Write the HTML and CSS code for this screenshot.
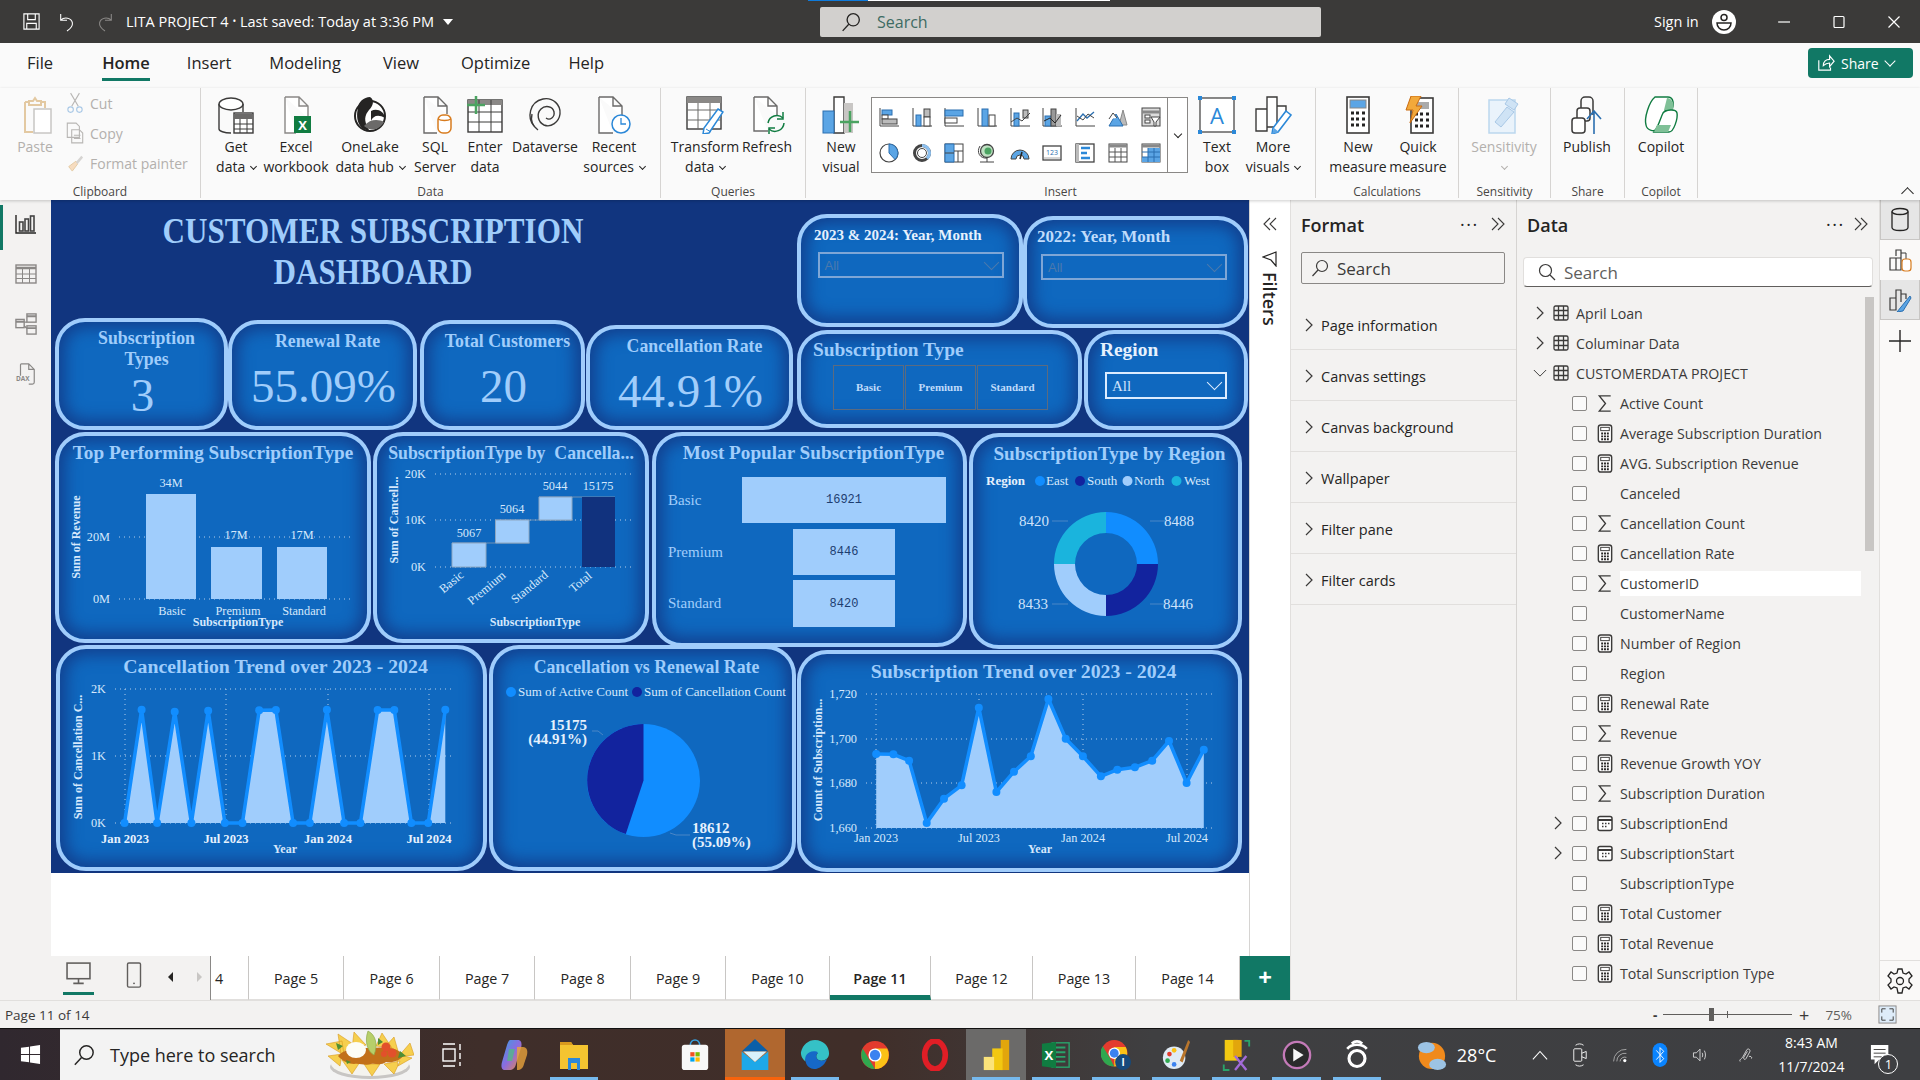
FILE: index.html
```html
<!DOCTYPE html>
<html lang="en">
<head>
    <meta charset="UTF-8">
    <title>LITA PROJECT 4 - Power BI Desktop</title>
    <link rel="stylesheet" href="styles.css">
</head>
<body>
    <svg class="defs" width="0" height="0">
        <symbol id="i-table" viewBox="0 0 16 16"><path d="M2.5 1h11a1.5 1.500 0 0 1 1.500 1.500v11a1.500 1.500 0 0 1-1.500 1.500h-11a1.500 1.500 0 0 1-1.500-1.500v-11A1.500 1.500 0 0 1 2.500 1zM1 5.500h14M1 10.500h14M5.500 1v14M10.500 1v14" fill="none" stroke="#3b3a39" stroke-width="1.300"/></symbol>
        <symbol id="i-sigma" viewBox="0 0 16 20"><path d="M14 2H2l6.500 8L2 18h12" fill="none" stroke="#3b3a39" stroke-width="1.400"/></symbol>
        <symbol id="i-calc" viewBox="0 0 16 20"><rect x="1" y="1" width="14" height="18" rx="2.500" fill="#fff" stroke="#3b3a39" stroke-width="1.500"/><rect x="3.500" y="3.500" width="9" height="3.500" fill="none" stroke="#3b3a39"/><path d="M4 10h2M7 10h2M10 10h2M4 13h2M7 13h2M10 13h2M4 16h2M7 16h2M10 16h2" stroke="#252423" stroke-width="2"/></symbol>
        <symbol id="i-date" viewBox="0 0 16 16"><rect x="1" y="1" width="14" height="14" rx="2" fill="#fff" stroke="#3b3a39" stroke-width="1.500"/><path d="M1 4.500h14" stroke="#3b3a39" stroke-width="2"/><path d="M5 8h1.500M8 8h1.500M11 8h1.500M5 11h1.500M8 11h1.500" stroke="#3b3a39" stroke-width="1.500"/></symbol>
        <symbol id="i-chev" viewBox="0 0 10 16"><path d="M2 2l6 6-6 6" fill="none" stroke="#3b3a39" stroke-width="1.200"/></symbol>
        <symbol id="i-dchev" viewBox="0 0 16 16"><path d="M2 2l6 6-6 6M8 2l6 6-6 6" fill="none" stroke="#3b3a39" stroke-width="1.100"/></symbol>
        <symbol id="i-mag" viewBox="0 0 18 18"><circle cx="11" cy="7" r="5.500" fill="none" stroke="currentColor" stroke-width="1.200"/><path d="M7 11l-5.500 6" fill="none" stroke="currentColor" stroke-width="1.200"/></symbol>
        <marker id="dot" markerUnits="userSpaceOnUse" markerWidth="10" markerHeight="10" refX="5" refY="5"><circle cx="5" cy="5" r="4" fill="#118dff"/></marker>
    </svg>

    <header class="titlebar">
        <svg class="tb-ic" viewBox="0 0 20 20"><path d="M2 2h16v16H2zM6 2v6h8V2M5 18v-6h10v6" fill="none" stroke="#fff" stroke-width="1.200"/></svg>
        <svg class="tb-undo" viewBox="0 0 20 24"><path d="M3 3v7h7M3 10c4-4 12-3 13 3 .6 4-3 7-6 9" fill="none" stroke="#fff" stroke-width="1.200"/></svg>
        <svg class="tb-redo" viewBox="0 0 20 24"><path d="M17 3v7h-7M17 10c-4-4-12-3-13 3-.6 4 3 7 6 9" fill="none" stroke="#8a8886" stroke-width="1.200"/></svg>
        <div class="doc-title">LITA PROJECT 4 <span class="mid-dot">•</span> Last saved: Today at 3:36 PM</div>
        <span class="doc-caret"></span>
        <div class="top-search">
            <svg class="top-search-ic"><use href="#i-mag"/></svg>
            <span>Search</span>
        </div>
        <div class="signin">Sign in</div>
        <svg class="avatar" viewBox="0 0 24 24"><circle cx="12" cy="12" r="12" fill="#fff"/><circle cx="12" cy="7.500" r="3" fill="none" stroke="#252423" stroke-width="1.500"/><path d="M5 13h14c0 4-3 7-7 7s-7-3-7-7z" fill="none" stroke="#252423" stroke-width="1.500"/></svg>
        <div class="win-btns">
            <svg viewBox="0 0 14 14"><path d="M1 7h12" stroke="#fff" stroke-width="1.200"/></svg>
            <svg viewBox="0 0 14 14"><rect x="2" y="1.500" width="10" height="11" rx="1" fill="none" stroke="#fff" stroke-width="1.200"/></svg>
            <svg viewBox="0 0 14 14"><path d="M1.500 1.500l11 11M12.500 1.500l-11 11" stroke="#fff" stroke-width="1.200"/></svg>
        </div>
    </header>

    <nav class="menubar">
        <a class="tab-file">File</a>
        <a class="tab-home">Home</a>
        <a class="tab-insert">Insert</a>
        <a class="tab-modeling">Modeling</a>
        <a class="tab-view">View</a>
        <a class="tab-optimize">Optimize</a>
        <a class="tab-help">Help</a>
        <button class="share-btn">
            <svg viewBox="0 0 20 20"><path d="M2 7v11h13v-3M7 13c0-5 3-7 7-7V2l5 6-5 6v-4c-3 0-5 1-7 3z" fill="none" stroke="#fff" stroke-width="1.300"/></svg>
            Share
            <span class="share-caret"></span>
        </button>
    </nav>

    <section class="ribbon">
        <div class="rgroup g-clip">
            <div class="rbody">
                <div class="rbtn w-paste off">
                    <svg viewBox="0 0 38 38"><path d="M13 5h4l2-3 2 3h4v4H13zM9 6h4M25 6h4v6M9 6v30h8" fill="none" stroke="#e3c9a2" stroke-width="2"/><rect x="18" y="13" width="17" height="24" fill="#fff" stroke="#c8c6c4" stroke-width="1.500"/></svg>
                    <span>Paste</span>
                </div>
                <div class="clip-col off">
                    <div class="clip-row"><svg viewBox="0 0 16 20"><path d="M4 1l7 12M12 1L5 13" stroke="#b8b6b4" fill="none"/><circle cx="4" cy="16" r="2.500" fill="none" stroke="#a9c8e6"/><circle cx="12" cy="16" r="2.500" fill="none" stroke="#a9c8e6"/></svg>Cut</div>
                    <div class="clip-row"><svg viewBox="0 0 16 20"><path d="M1 1h8l3 3v10H1zM5 7h7l3 3v9H5z" fill="#fafafa" stroke="#b8b6b4"/><path d="M7 12h6M7 15h6" stroke="#b8b6b4"/></svg>Copy</div>
                    <div class="clip-row"><svg viewBox="0 0 20 20"><path d="M11 8l-8 6 4 5 6-8z" fill="#f6dcc0" stroke="#e3c9a2"/><path d="M11 9l6-7 2 2-6 7z" fill="#d6d4d2"/></svg>Format painter</div>
                </div>
            </div>
            <div class="rlabel">Clipboard</div>
        </div>

        <div class="rgroup g-data">
            <div class="rbody">
                <div class="rbtn w-60">
                    <svg viewBox="0 0 38 38"><path d="M2 8v25c0 2 5 4 12 4M26 8v8" fill="none" stroke="#3b3a39" stroke-width="1.400"/><ellipse cx="14" cy="8" rx="12" ry="6" fill="#fff" stroke="#3b3a39" stroke-width="1.400"/><rect x="17" y="17" width="19" height="20" fill="#fff" stroke="#3b3a39" stroke-width="1.400"/><path d="M17 18h19v5H17z" fill="#6b6a69"/><path d="M17 28h19M17 33h19M23 23v14M30 23v14" stroke="#3b3a39"/></svg>
                    <span>Get<br>data <i class="mini-caret"></i></span>
                </div>
                <div class="rbtn w-60">
                    <svg viewBox="0 0 38 38"><path d="M8 1h14l9 9v12M8 1v36h11M22 1v9h9" fill="#fff" stroke="#8a8886" stroke-width="1.400"/><rect x="17" y="20" width="17" height="17" fill="#107c41"/><text class="xl-x" x="25.500" y="33.500" text-anchor="middle">X</text></svg>
                    <span>Excel<br>workbook</span>
                </div>
                <div class="rbtn w-88">
                    <svg viewBox="0 0 38 38"><circle cx="19" cy="20" r="15" fill="#fff" stroke="#252423" stroke-width="2"/><path d="M7 12c0-6 6-11 12-11 5 3 3 9-1 13-4 5-6 10 0 20-9 1-14-10-11-22z" fill="#252423"/><path d="M20 15c6-3 13 0 14 7-7-4-12-2-14 3z" fill="#252423"/><path d="M13 30c6-7 14-7 20-4-5 8-13 10-20 4z" fill="#6b6a69"/></svg>
                    <span>OneLake<br>data hub <i class="mini-caret"></i></span>
                </div>
                <div class="rbtn w-42">
                    <svg viewBox="0 0 38 38"><path d="M8 1h14l9 9v8M8 1v36h13M22 1v9h9" fill="#fff" stroke="#6b6a69" stroke-width="1.400"/><rect x="22" y="19" width="13" height="18" rx="5" fill="#fff" stroke="#d87c1f" stroke-width="1.500"/><path d="M22 23c3 2 10 2 13 0" fill="none" stroke="#d87c1f" stroke-width="1.500"/></svg>
                    <span>SQL<br>Server</span>
                </div>
                <div class="rbtn w-58">
                    <svg viewBox="0 0 38 38"><rect x="2" y="4" width="34" height="32" fill="#fff" stroke="#3b3a39" stroke-width="1.400"/><path d="M2 4h34v5H2z" fill="#8a8886"/><path d="M2 16h34M2 26h34M13 4v32M25 4v32" stroke="#3b3a39"/><path d="M10 0v18M1 9h18" stroke="#4ba361" stroke-width="2.500"/></svg>
                    <span>Enter<br>data</span>
                </div>
                <div class="rbtn w-62">
                    <svg viewBox="0 0 38 38"><g fill="none" stroke="#3b3a39" stroke-width="1.400"><path d="M8 30C1 22 3 6 17 3c10-2 18 6 17 15-1 8-9 14-16 11-6-3-8-11-3-16 4-4 12-3 13 3 1 5-4 9-8 6"/><path d="M12 34C4 28 5 22 6 18"/></g></svg>
                    <span>Dataverse</span>
                </div>
                <div class="rbtn w-76">
                    <svg viewBox="0 0 38 38"><path d="M4 1h14l9 9v10M4 1v36h14M18 1v9h9" fill="#fff" stroke="#6b6a69" stroke-width="1.400"/><circle cx="26" cy="28" r="9" fill="#fff" stroke="#2b88d8" stroke-width="1.500"/><path d="M26 22v6h5" fill="none" stroke="#2b88d8" stroke-width="1.300"/></svg>
                    <span>Recent<br>sources <i class="mini-caret"></i></span>
                </div>
            </div>
            <div class="rlabel">Data</div>
        </div>

        <div class="rgroup g-queries">
            <div class="rbody">
                <div class="rbtn w-70">
                    <svg viewBox="0 0 38 38"><rect x="1" y="1" width="34" height="32" fill="#fff" stroke="#3b3a39" stroke-width="1.400"/><path d="M1 1h34v6H1z" fill="#8a8886"/><path d="M1 14h34M1 24h34M12 7v26M24 7v26" stroke="#6b6a69"/><path d="M32 13l5 3-14 21-6 1 1-6z" fill="#fff" stroke="#2b88d8" stroke-width="1.500"/><path d="M20 33l5 3" stroke="#2b88d8"/></svg>
                    <span>Transform<br>data <i class="mini-caret"></i></span>
                </div>
                <div class="rbtn w-54">
                    <svg viewBox="0 0 38 38"><path d="M6 1h14l9 9v9M6 1v34h14M20 1v9h9" fill="#fff" stroke="#6b6a69" stroke-width="1.400"/><path d="M20 27a9 9 0 0 1 15-5M36 27a9 9 0 0 1-15 6" fill="none" stroke="#107c41" stroke-width="1.500"/><path d="M35 16v7h-6M21 38v-6h6" fill="none" stroke="#107c41" stroke-width="1.500"/></svg>
                    <span>Refresh</span>
                </div>
            </div>
            <div class="rlabel">Queries</div>
        </div>

        <div class="rgroup g-insert">
            <div class="rbody">
                <div class="rbtn w-56">
                    <svg viewBox="0 0 38 38"><path d="M12 1h10v36H12z" fill="#fff" stroke="#3b3a39" stroke-width="1.400"/><rect x="1" y="15" width="11" height="22" fill="#5ba5e5" stroke="#2b6fb0"/><rect x="22" y="7" width="9" height="30" fill="#c8c6c4"/><path d="M28 15v21M18 26h19" stroke="#4ba361" stroke-width="2.500"/></svg>
                    <span>New<br>visual</span>
                </div>
                <div class="gallery">
                    <div class="gallery-grid">
                        <svg viewBox="0 0 20 20"><path d="M1 1v18h19" fill="none" stroke="#444"/><rect x="3" y="3" width="10" height="5" fill="#5ba5e5" stroke="#2b6fb0"/><rect x="3" y="8" width="6" height="4" fill="#fff" stroke="#444"/><rect x="3" y="12" width="15" height="5" fill="#bbb" stroke="#444"/></svg>
                        <svg viewBox="0 0 20 20"><path d="M1 1v18h19" fill="none" stroke="#444"/><rect x="4" y="8" width="5" height="11" fill="#5ba5e5" stroke="#2b6fb0"/><rect x="12" y="2" width="6" height="8" fill="#bbb" stroke="#444"/><rect x="12" y="10" width="6" height="9" fill="#fff" stroke="#444"/></svg>
                        <svg viewBox="0 0 20 20"><path d="M1 1v18h19" fill="none" stroke="#444"/><rect x="1" y="3" width="18" height="6" fill="#5ba5e5" stroke="#2b6fb0"/><rect x="1" y="11" width="12" height="5" fill="#fff" stroke="#444"/></svg>
                        <svg viewBox="0 0 20 20"><path d="M1 1v18h19" fill="none" stroke="#444"/><rect x="5" y="2" width="6" height="17" fill="#5ba5e5" stroke="#2b6fb0"/><rect x="12" y="8" width="6" height="11" fill="#fff" stroke="#444"/></svg>
                        <svg viewBox="0 0 20 20"><path d="M1 1v18h19" fill="none" stroke="#444"/><rect x="4" y="6" width="5" height="13" fill="#5ba5e5" stroke="#2b6fb0"/><rect x="13" y="3" width="5" height="8" fill="#bbb" stroke="#444"/><path d="M1 15l6-4 5 3 8-8" fill="none" stroke="#444"/></svg>
                        <svg viewBox="0 0 20 20"><path d="M1 1v18h19" fill="none" stroke="#444"/><rect x="3" y="9" width="6" height="10" fill="#5ba5e5" stroke="#2b6fb0"/><rect x="9" y="2" width="5" height="17" fill="#999" stroke="#444"/><rect x="14" y="7" width="5" height="12" fill="#bbb"/><path d="M2 14l6-3 5 5 6-8" fill="none" stroke="#252423"/></svg>
                        <svg viewBox="0 0 20 20"><path d="M1 1v18h19" fill="none" stroke="#444"/><path d="M2 14l6-7 4 4 7-6" fill="none" stroke="#2b6fb0" stroke-width="1.300"/><path d="M2 9l6 4 5-6 6 4" fill="none" stroke="#444"/></svg>
                        <svg viewBox="0 0 20 20"><path d="M11 18l4-15 4 15z" fill="#bbb" stroke="#888"/><path d="M1 19l7-12 7 12z" fill="#5ba5e5" stroke="#2b6fb0"/><path d="M1 12l4-6 4 5" fill="#fff" stroke="#444"/></svg>
                        <svg viewBox="0 0 20 20"><rect x="1" y="1" width="18" height="18" fill="#ddd" stroke="#444"/><path d="M1 5h18" stroke="#888" stroke-width="3"/><rect x="4" y="8" width="5" height="3" fill="#fff" stroke="#444"/><rect x="4" y="13" width="5" height="3" fill="#fff" stroke="#444"/><path d="M10 10h9l-4 5v4h-2v-4z" fill="#fff" stroke="#444"/></svg>
                        <svg viewBox="0 0 20 20"><circle cx="10" cy="10" r="9" fill="#fff" stroke="#444" stroke-width="1.200"/><path d="M10 10V1a9 9 0 0 1 6 15.500z" fill="#5ba5e5" stroke="#2b6fb0"/></svg>
                        <svg viewBox="0 0 20 20"><circle cx="10" cy="10" r="7.500" fill="none" stroke="#444" stroke-width="3"/><path d="M10 2.500a7.500 7.500 0 0 1 5 13" fill="none" stroke="#8dc0ef" stroke-width="3"/><circle cx="10" cy="10" r="4.500" fill="#fff" stroke="#444"/></svg>
                        <svg viewBox="0 0 20 20"><rect x="1" y="1" width="18" height="18" fill="#fff" stroke="#444"/><path d="M1 1h9v18H1z" fill="#5ba5e5" stroke="#2b6fb0"/><path d="M1 10h9M10 8h9M14 8v11" stroke="#444"/></svg>
                        <svg viewBox="0 0 20 20"><circle cx="10" cy="8" r="6.500" fill="#bfe0c2" stroke="#444" stroke-width="1.300"/><circle cx="11" cy="8" r="3.500" fill="#4ba361"/><path d="M3 19h14M10 15v4M3 3c-4 6 0 13 7 12" fill="none" stroke="#444"/></svg>
                        <svg viewBox="0 0 20 20"><path d="M1 16a9 9 0 0 1 18 0h-5a4 4 0 0 0-8 0z" fill="#5ba5e5" stroke="#444"/><path d="M12 9l-2 7" stroke="#252423" stroke-width="1.500"/></svg>
                        <svg viewBox="0 0 20 20"><rect x="1" y="3" width="18" height="14" fill="#fff" stroke="#444" stroke-width="1.300"/><text class="gal-num" x="10" y="12" text-anchor="middle">123</text><path d="M2 15h16" stroke="#aaa"/></svg>
                        <svg viewBox="0 0 20 20"><rect x="1" y="1" width="18" height="18" fill="#fff" stroke="#444" stroke-width="1.300"/><rect x="1" y="1" width="3" height="18" fill="#bbb"/><path d="M6 5h9M6 10h6M6 15h9" stroke="#2b88d8" stroke-width="2.500"/></svg>
                        <svg viewBox="0 0 20 20"><rect x="1" y="1" width="18" height="18" fill="#fff" stroke="#444"/><path d="M1 3h18" stroke="#888" stroke-width="3"/><path d="M1 9h18M1 14h18M7 5v14M13 5v14" stroke="#555"/></svg>
                        <svg viewBox="0 0 20 20"><rect x="1" y="1" width="18" height="18" fill="#fff" stroke="#444"/><path d="M1 3h18" stroke="#888" stroke-width="3"/><rect x="7" y="5" width="12" height="9" fill="#5ba5e5"/><rect x="1" y="14" width="18" height="5" fill="#5ba5e5"/><path d="M1 9h18M1 14h18M7 5v14M13 5v14" stroke="#2b6fb0"/></svg>
                    </div>
                    <div class="gallery-more"><i class="mini-caret dark"></i></div>
                </div>
                <div class="rbtn w-50 box-gap">
                    <svg viewBox="0 0 38 38"><rect x="2" y="2" width="34" height="34" fill="#fff" stroke="#3b3a39" stroke-width="1.200"/><path d="M0 0h4v4H0zM34 0h4v4h-4zM0 34h4v4H0zM34 34h4v4h-4z" fill="#2b88d8"/><text class="box-a" x="19" y="28" text-anchor="middle">A</text></svg>
                    <span>Text<br>box</span>
                </div>
                <div class="rbtn w-62">
                    <svg viewBox="0 0 38 38"><path d="M13 1h10v30H13zM2 13h11v22H2zM23 10h9v12" fill="#fff" stroke="#3b3a39" stroke-width="1.400"/><path d="M32 15l5 4-13 17-6 2 1-6z" fill="#fff" stroke="#2b88d8" stroke-width="1.600"/><path d="M18 38l2-6 5 4z" fill="#5ba5e5"/></svg>
                    <span>More<br>visuals <i class="mini-caret"></i></span>
                </div>
            </div>
            <div class="rlabel">Insert</div>
        </div>

        <div class="rgroup g-calc">
            <div class="rbody">
                <div class="rbtn w-60">
                    <svg viewBox="0 0 38 38"><rect x="8" y="1" width="22" height="36" fill="#fff" stroke="#3b3a39" stroke-width="1.600"/><rect x="11" y="4" width="16" height="8" fill="#5ba5e5" stroke="#8a8886"/><path d="M12 17h3M17 17h3M23 17h3M12 23h3M17 23h3M23 23h3M12 29h3M17 29h3M23 29h3" stroke="#252423" stroke-width="3"/></svg>
                    <span>New<br>measure</span>
                </div>
                <div class="rbtn w-60">
                    <svg viewBox="0 0 38 38"><rect x="12" y="2" width="22" height="35" fill="#fff" stroke="#3b3a39" stroke-width="1.600"/><rect x="17" y="6" width="13" height="7" fill="#aaa"/><path d="M16 18h3M21 18h3M27 18h3M16 24h3M21 24h3M27 24h3M16 30h3M21 30h3M27 30h3" stroke="#252423" stroke-width="3"/><path d="M12 0h10l-5 10h6L11 27l3-13H7z" fill="#f2a93b" stroke="#c96a10"/></svg>
                    <span>Quick<br>measure</span>
                </div>
            </div>
            <div class="rlabel">Calculations</div>
        </div>

        <div class="rgroup g-sens">
            <div class="rbody">
                <div class="rbtn w-90 off">
                    <svg viewBox="0 0 38 38"><path d="M4 4h26v33H4z" fill="#eaf3fb" stroke="#bcd7ee" stroke-width="1.500"/><path d="M24 2l9 6-4 6-9-6zM10 26l12-15 7 5-13 15z" fill="#cfe3f5" stroke="#a9c8e6"/></svg>
                    <span>Sensitivity<br><i class="mini-caret"></i></span>
                </div>
            </div>
            <div class="rlabel">Sensitivity</div>
        </div>

        <div class="rgroup g-share">
            <div class="rbody">
                <div class="rbtn w-72">
                    <svg viewBox="0 0 38 38"><path d="M13 12V5a4 4 0 0 1 4-4h4a4 4 0 0 1 4 4v14" fill="none" stroke="#3b3a39" stroke-width="1.500"/><rect x="9" y="12" width="13" height="13" rx="3" fill="#fff" stroke="#3b3a39" stroke-width="1.500"/><rect x="4" y="22" width="13" height="15" rx="3" fill="#fff" stroke="#3b3a39" stroke-width="1.500"/><path d="M26 38V15M19 23l7-8 7 8" fill="none" stroke="#2b6fb0" stroke-width="1.600"/></svg>
                    <span>Publish</span>
                </div>
            </div>
            <div class="rlabel">Share</div>
        </div>

        <div class="rgroup g-copilot">
            <div class="rbody">
                <div class="rbtn w-72">
                    <svg viewBox="0 0 38 38"><path d="M13 1h13c4 0 6 4 5 9l-1 4-7 1-8 18c-2 3-10 2-11-4C2 22 7 6 13 1z" fill="#fff" stroke="#107c41" stroke-width="1.400"/><path d="M25 2c5 0 7 5 6 12h-9z" fill="#7fc097"/><path d="M12 36h15c5 0 9-14 8-19-1-5-12-3-14 0-3 6-4 13-9 19z" fill="#fff" stroke="#107c41" stroke-width="1.400"/><path d="M12 36h14l3-7H15z" fill="#7fc097"/></svg>
                    <span>Copilot</span>
                </div>
            </div>
            <div class="rlabel">Copilot</div>
        </div>
        <span class="ribbon-collapse"></span>
    </section>

    <main class="workspace">
        <aside class="left-rail">
            <svg viewBox="0 0 22 20"><path d="M1 1v18h20" fill="none" stroke="#252423" stroke-width="1.400"/><g fill="none" stroke="#444" stroke-width="1.600"><rect x="4.500" y="8" width="3.500" height="9"/><rect x="10" y="5" width="3.500" height="12"/><rect x="15.500" y="2" width="3.500" height="15"/></g></svg>
            <svg viewBox="0 0 22 20" class="dim"><rect x="1" y="1" width="20" height="18" fill="none" stroke="#8a8886" stroke-width="1.400"/><path d="M1 4h20" stroke="#8a8886" stroke-width="2.500"/><path d="M1 10h20M1 14.500h20M7.500 5v14M14.500 5v14" stroke="#8a8886"/></svg>
            <svg viewBox="0 0 24 24" class="dim"><g fill="none" stroke="#8a8886" stroke-width="1.500"><rect x="1" y="7" width="9" height="9"/><rect x="13" y="1" width="10" height="9"/><rect x="13" y="14" width="10" height="9"/><path d="M10 10h3M10 14l3 3"/></g><path d="M1 9.500h9M13 3.500h10M13 16.500h10" stroke="#8a8886" stroke-width="2"/></svg>
            <svg viewBox="0 0 24 24" class="dim"><path d="M6 14V2c0-1 1-1 1-1h8l6 6v14c0 2-2 2-2 2h-4M15 1v6h6" fill="none" stroke="#8a8886" stroke-width="1.300"/><text class="dax" x="8.500" y="20" text-anchor="middle">DAX</text></svg>
        </aside>

        <div class="center">
            <div class="center-top">
                <div class="report">
                    <div class="canvas">
                        <div class="row-top">
                            <div class="top-left">
                                <h1 class="dash-title">CUSTOMER SUBSCRIPTION<br>DASHBOARD</h1>
                                <div class="kpi-row">
                                    <div class="card kpi kpi-types">
                                        <div class="kpi-title">Subscription<br>Types</div>
                                        <div class="kpi-value">3</div>
                                    </div>
                                    <div class="card kpi kpi-renew">
                                        <div class="kpi-title">Renewal Rate</div>
                                        <div class="kpi-value">55.09%</div>
                                    </div>
                                    <div class="card kpi kpi-total">
                                        <div class="kpi-title">Total Customers</div>
                                        <div class="kpi-value">20</div>
                                    </div>
                                    <div class="card kpi kpi-cancel">
                                        <div class="kpi-title">Cancellation Rate</div>
                                        <div class="kpi-value">44.91%</div>
                                    </div>
                                </div>
                            </div>
                            <div class="top-right">
                                <div class="slicer-row">
                                    <div class="card slicer sl-2324">
                                        <div class="sl-title sl-small">2023 &amp; 2024: Year, Month</div>
                                        <div class="dropdown dim-drop">All</div>
                                    </div>
                                    <div class="card slicer sl-2022">
                                        <div class="sl-title">2022: Year, Month</div>
                                        <div class="dropdown dim-drop">All</div>
                                    </div>
                                </div>
                                <div class="slicer-row row-b">
                                    <div class="card slicer sl-type">
                                        <div class="sl-title sl-big">Subscription Type</div>
                                        <div class="sub-tiles"><span>Basic</span><span>Premium</span><span>Standard</span></div>
                                    </div>
                                    <div class="card slicer sl-region">
                                        <div class="sl-title sl-big sl-white">Region</div>
                                        <div class="dropdown lit-drop">All</div>
                                    </div>
                                </div>
                            </div>
                        </div>

                        <div class="row-mid">
                            <div class="card chart c-top">
                                <div class="chart-title">Top Performing SubscriptionType</div>
                                <svg width="308" height="175" viewBox="59 464 308 175">
                                    <path class="grid" d="M119 599H354M119 537H354"/>
                                    <path class="bar" d="M146 494h50v105h-50zM211 547h51v52h-51zM277 547h50v52h-50z"/>
                                    <text class="ax" x="171" y="487" text-anchor="middle">34M</text>
                                    <text class="ax" x="236" y="539" text-anchor="middle">17M</text>
                                    <text class="ax" x="302" y="539" text-anchor="middle">17M</text>
                                    <text class="ax" x="110" y="541" text-anchor="end">20M</text>
                                    <text class="ax" x="110" y="603" text-anchor="end">0M</text>
                                    <text class="ax" x="172" y="615" text-anchor="middle">Basic</text>
                                    <text class="ax" x="238" y="615" text-anchor="middle">Premium</text>
                                    <text class="ax" x="304" y="615" text-anchor="middle">Standard</text>
                                    <text class="ax-b" x="238" y="626" text-anchor="middle">SubscriptionType</text>
                                    <text class="ax-b" transform="translate(80 537) rotate(-90)" text-anchor="middle">Sum of Revenue</text>
                                </svg>
                            </div>
                            <div class="card chart c-wf">
                                <div class="chart-title wf-title">SubscriptionType by&nbsp; Cancella...</div>
                                <svg width="268" height="175" viewBox="377 464 268 175">
                                    <path class="grid" d="M435 474H633M435 520H633M435 567H633"/>
                                    <path class="wf-join" d="M452 543H530M495 520H573M539 497H615"/>
                                    <path class="bar edge" d="M452 543h34v24h-34zM495.500 520h33.500v23h-33.500zM539 497h33v23h-33z"/>
                                    <path class="navy" d="M582 497h33v70h-33z"/>
                                    <text class="ax" x="426" y="478" text-anchor="end">20K</text>
                                    <text class="ax" x="426" y="524" text-anchor="end">10K</text>
                                    <text class="ax" x="426" y="571" text-anchor="end">0K</text>
                                    <text class="ax" x="469" y="537" text-anchor="middle">5067</text>
                                    <text class="ax" x="512" y="513" text-anchor="middle">5064</text>
                                    <text class="ax" x="555" y="490" text-anchor="middle">5044</text>
                                    <text class="ax" x="598" y="490" text-anchor="middle">15175</text>
                                    <text class="ax" transform="translate(454 585) rotate(-40)" text-anchor="middle">Basic</text>
                                    <text class="ax" transform="translate(489 591) rotate(-40)" text-anchor="middle">Premium</text>
                                    <text class="ax" transform="translate(532 590) rotate(-40)" text-anchor="middle">Standard</text>
                                    <text class="ax" transform="translate(583 585) rotate(-40)" text-anchor="middle">Total</text>
                                    <text class="ax-b" x="535" y="626" text-anchor="middle">SubscriptionType</text>
                                    <text class="ax-b" transform="translate(398 520) rotate(-90)" text-anchor="middle">Sum of Cancell...</text>
                                </svg>
                            </div>
                            <div class="card chart c-pop">
                                <div class="chart-title">Most Popular SubscriptionType</div>
                                <svg width="307" height="179" viewBox="656 464 307 179">
                                    <path class="bar" d="M742 477h204v46H742zM793 529h102v46H793zM793 580h102v47H793z"/>
                                    <text class="cat" x="668" y="505">Basic</text>
                                    <text class="cat" x="668" y="557">Premium</text>
                                    <text class="cat" x="668" y="608">Standard</text>
                                    <text class="bar-val" x="844" y="503" text-anchor="middle">16921</text>
                                    <text class="bar-val" x="844" y="555" text-anchor="middle">8446</text>
                                    <text class="bar-val" x="844" y="607" text-anchor="middle">8420</text>
                                </svg>
                            </div>
                            <div class="card chart c-region">
                                <div class="chart-title">SubscriptionType by Region</div>
                                <svg width="265" height="180" viewBox="973 465 265 180">
                                    <text class="leg-h" x="986" y="485">Region</text>
                                    <circle cx="1040" cy="481" r="5" fill="#118dff"/><text class="leg" x="1046" y="485">East</text>
                                    <circle cx="1080" cy="481" r="5" fill="#12239e"/><text class="leg" x="1087" y="485">South</text>
                                    <circle cx="1127.500" cy="481" r="5" fill="#a0cdfc"/><text class="leg" x="1134" y="485">North</text>
                                    <circle cx="1176.500" cy="481" r="5" fill="#1ab4dd"/><text class="leg" x="1184" y="485">West</text>
                                    <path fill="#118dff" d="M1106 512A52 52 0 0 1 1158 564L1137 564A31 31 0 0 0 1106 533Z"/>
                                    <path fill="#12239e" d="M1158 564A52 52 0 0 1 1106 616L1106 595A31 31 0 0 0 1137 564Z"/>
                                    <path fill="#a0cdfc" d="M1106 616A52 52 0 0 1 1054 564L1075 564A31 31 0 0 0 1106 595Z"/>
                                    <path fill="#1ab4dd" d="M1054 564A52 52 0 0 1 1106 512L1106 533A31 31 0 0 0 1075 564Z"/>
                                    <path class="leader" d="M1052 521h16M1166 521h-16M1052 604h16M1166 604h-16"/>
                                    <text class="don" x="1034" y="526" text-anchor="middle">8420</text>
                                    <text class="don" x="1179" y="526" text-anchor="middle">8488</text>
                                    <text class="don" x="1033" y="609" text-anchor="middle">8433</text>
                                    <text class="don" x="1178" y="609" text-anchor="middle">8446</text>
                                </svg>
                            </div>
                        </div>

                        <div class="row-bottom">
                            <div class="card chart c-ctrend">
                                <div class="chart-title trend-title">Cancellation Trend over 2023 - 2024</div>
                                <svg width="423" height="190" viewBox="60 677 423 190">
                                    <path class="grid" d="M115 689H453M115 756H453M115 823H453M125 689V823M226 689V823M328 689V823M429 689V823"/>
                                    <path class="bar" d="M124.500 823L141.600 709.700L157.100 823L174.700 711.700L191.400 823L208.200 710.700L224.900 823L242.400 823L259.200 710.300L275.900 710L293.100 823L309.800 823L326.900 709.700L344.100 823L360.400 823L377.600 710L394.300 710L411.400 823L428.200 823L445.300 709.700V823Z"/>
                                    <polyline class="trend-line" points="124.500,823 141.600,709.700 157.100,823 174.700,711.700 191.400,823 208.200,710.700 224.900,823 242.400,823 259.200,710.300 275.900,710 293.100,823 309.800,823 326.900,709.700 344.100,823 360.400,823 377.600,710 394.300,710 411.400,823 428.200,823 445.300,709.700"/>
                                    <text class="ax" x="106" y="693" text-anchor="end">2K</text>
                                    <text class="ax" x="106" y="760" text-anchor="end">1K</text>
                                    <text class="ax" x="106" y="827" text-anchor="end">0K</text>
                                    <text class="ax-w" x="125" y="843" text-anchor="middle">Jan 2023</text>
                                    <text class="ax-w" x="226" y="843" text-anchor="middle">Jul 2023</text>
                                    <text class="ax-w" x="328" y="843" text-anchor="middle">Jan 2024</text>
                                    <text class="ax-w" x="429" y="843" text-anchor="middle">Jul 2024</text>
                                    <text class="ax-b" x="285" y="853" text-anchor="middle">Year</text>
                                    <text class="ax-b" transform="translate(82 757) rotate(-90)" text-anchor="middle">Sum of Cancellation C...</text>
                                </svg>
                            </div>
                            <div class="card chart c-pie">
                                <div class="chart-title pie-title">Cancellation vs Renewal Rate</div>
                                <svg width="299" height="190" viewBox="493 677 299 190">
                                    <circle cx="511" cy="692" r="5" fill="#118dff"/><text class="leg" x="518" y="696">Sum of Active Count</text>
                                    <circle cx="637" cy="692" r="5" fill="#12239e"/><text class="leg" x="644" y="696">Sum of Cancellation Count</text>
                                    <circle cx="643.500" cy="780.500" r="56.500" fill="#118dff"/>
                                    <path fill="#12239e" d="M643.500 780.500L643.500 724A56.500 56.500 0 0 0 625.800 834.100Z"/>
                                    <path class="leader" d="M592 731h6l5 4M670 833l6 2h14"/>
                                    <text class="pie-lab" x="587" y="730" text-anchor="end">15175</text>
                                    <text class="pie-lab" x="587" y="744" text-anchor="end">(44.91%)</text>
                                    <text class="pie-lab" x="692" y="833">18612</text>
                                    <text class="pie-lab" x="692" y="847">(55.09%)</text>
                                </svg>
                            </div>
                            <div class="card chart c-strend">
                                <div class="chart-title trend-title">Subscription Trend over 2023 - 2024</div>
                                <svg width="437" height="186" viewBox="801 682 437 186">
                                    <path class="grid" d="M866 694H1214M866 739H1214M866 783H1214M866 828H1214M876 694V828M979 694V828M1083 694V828M1187 694V828"/>
                                    <path class="bar" d="M876.200 754L893.400 754.300L909.100 760.700L926.700 823L944 798.700L961.600 785.300L978.800 707.700L996.400 792L1014 771.700L1030.800 756.300L1048.400 699L1065.700 738.700L1082.900 756.300L1100.900 776.300L1117.300 769.700L1134.900 767.300L1152.200 760.700L1169 741L1186.600 783L1203.800 749.700V828H876.200Z"/>
                                    <polyline class="trend-line" points="876.200,754 893.400,754.300 909.100,760.700 926.700,823 944,798.700 961.600,785.300 978.800,707.700 996.400,792 1014,771.700 1030.800,756.300 1048.400,699 1065.700,738.700 1082.900,756.300 1100.900,776.300 1117.300,769.700 1134.900,767.300 1152.200,760.700 1169,741 1186.600,783 1203.800,749.700"/>
                                    <text class="ax" x="857" y="698" text-anchor="end">1,720</text>
                                    <text class="ax" x="857" y="743" text-anchor="end">1,700</text>
                                    <text class="ax" x="857" y="787" text-anchor="end">1,680</text>
                                    <text class="ax" x="857" y="832" text-anchor="end">1,660</text>
                                    <text class="ax" x="876" y="842" text-anchor="middle">Jan 2023</text>
                                    <text class="ax" x="979" y="842" text-anchor="middle">Jul 2023</text>
                                    <text class="ax" x="1083" y="842" text-anchor="middle">Jan 2024</text>
                                    <text class="ax" x="1187" y="842" text-anchor="middle">Jul 2024</text>
                                    <text class="ax-b" x="1040" y="853" text-anchor="middle">Year</text>
                                    <text class="ax-b" transform="translate(822 760) rotate(-90)" text-anchor="middle">Count of Subscription...</text>
                                </svg>
                            </div>
                        </div>
                    </div>
                </div>

                <aside class="filters">
                    <svg class="filters-chev" viewBox="0 0 16 16"><path d="M14 2L8 8l6 6M8 2L2 8l6 6" fill="none" stroke="#3b3a39" stroke-width="1.100"/></svg>
                    <svg class="filters-funnel" viewBox="0 0 16 16"><path d="M14 1L1 6l8 3 5 6z" fill="none" stroke="#252423" stroke-width="1.200"/></svg>
                    <div class="filters-text">Filters</div>
                </aside>
            </div>

            <div class="tabbar">
                <div class="tab-tools">
                    <div class="view-ic active">
                        <svg viewBox="0 0 24 22"><rect x="1" y="1" width="22" height="15" fill="none" stroke="#605e5c" stroke-width="1.500"/><path d="M12 16v4M7 20.500h10" stroke="#605e5c" stroke-width="1.500"/></svg>
                    </div>
                    <div class="view-ic phone">
                        <svg viewBox="0 0 16 28"><rect x="1" y="1" width="14" height="26" rx="1.500" fill="none" stroke="#605e5c" stroke-width="1.500"/><circle cx="8" cy="23" r="1" fill="#605e5c"/></svg>
                    </div>
                    <span class="tri-left"></span>
                    <span class="tri-right"></span>
                </div>
                <a class="ptab stub">4</a>
                <a class="ptab p95">Page 5</a>
                <a class="ptab p96">Page 6</a>
                <a class="ptab p95">Page 7</a>
                <a class="ptab p96">Page 8</a>
                <a class="ptab p95">Page 9</a>
                <a class="ptab p104">Page 10</a>
                <a class="ptab p101 current">Page 11</a>
                <a class="ptab p102">Page 12</a>
                <a class="ptab p103">Page 13</a>
                <a class="ptab p104">Page 14</a>
                <a class="ptab-add">+</a>
            </div>
        </div>

        <aside class="format-pane">
            <div class="pane-head">
                <span class="pane-title">Format</span>
                <span class="dots">···</span>
                <svg class="pane-chev"><use href="#i-dchev"/></svg>
            </div>
            <div class="format-search">
                <svg><use href="#i-mag"/></svg>
                <span>Search</span>
            </div>
            <ul class="format-list">
                <li><svg><use href="#i-chev"/></svg>Page information</li>
                <li><svg><use href="#i-chev"/></svg>Canvas settings</li>
                <li><svg><use href="#i-chev"/></svg>Canvas background</li>
                <li><svg><use href="#i-chev"/></svg>Wallpaper</li>
                <li><svg><use href="#i-chev"/></svg>Filter pane</li>
                <li><svg><use href="#i-chev"/></svg>Filter cards</li>
            </ul>
        </aside>

        <aside class="data-pane">
            <div class="pane-head">
                <span class="pane-title">Data</span>
                <span class="dots">···</span>
                <svg class="pane-chev"><use href="#i-dchev"/></svg>
            </div>
            <div class="data-search">
                <svg viewBox="0 0 18 18"><circle cx="7.500" cy="7.500" r="6" fill="none" stroke="#3b3a39" stroke-width="1.200"/><path d="M12 12l5 5" stroke="#3b3a39" stroke-width="1.200"/></svg>
                <span>Search</span>
            </div>
            <div class="scrollbar"></div>
            <ul class="tree">
                <li class="t-table"><svg class="t-exp"><use href="#i-chev"/></svg><svg class="t-tab"><use href="#i-table"/></svg>April Loan</li>
                <li class="t-table"><svg class="t-exp"><use href="#i-chev"/></svg><svg class="t-tab"><use href="#i-table"/></svg>Columinar Data</li>
                <li class="t-table"><svg class="t-exp open" viewBox="0 0 16 10"><path d="M1 1l7 7 7-7" fill="none" stroke="#3b3a39" stroke-width="1.100"/></svg><svg class="t-tab"><use href="#i-table"/></svg>CUSTOMERDATA PROJECT</li>
                <li><i class="box"></i><svg class="t-ic"><use href="#i-sigma"/></svg>Active Count</li>
                <li><i class="box"></i><svg class="t-ic"><use href="#i-calc"/></svg>Average Subscription Duration</li>
                <li><i class="box"></i><svg class="t-ic"><use href="#i-calc"/></svg>AVG. Subscription Revenue</li>
                <li><i class="box"></i><span class="t-none"></span>Canceled</li>
                <li><i class="box"></i><svg class="t-ic"><use href="#i-sigma"/></svg>Cancellation Count</li>
                <li><i class="box"></i><svg class="t-ic"><use href="#i-calc"/></svg>Cancellation Rate</li>
                <li><i class="box"></i><svg class="t-ic"><use href="#i-sigma"/></svg><span class="t-hover">CustomerID</span></li>
                <li><i class="box"></i><span class="t-none"></span>CustomerName</li>
                <li><i class="box"></i><svg class="t-ic"><use href="#i-calc"/></svg>Number of Region</li>
                <li><i class="box"></i><span class="t-none"></span>Region</li>
                <li><i class="box"></i><svg class="t-ic"><use href="#i-calc"/></svg>Renewal Rate</li>
                <li><i class="box"></i><svg class="t-ic"><use href="#i-sigma"/></svg>Revenue</li>
                <li><i class="box"></i><svg class="t-ic"><use href="#i-calc"/></svg>Revenue Growth YOY</li>
                <li><i class="box"></i><svg class="t-ic"><use href="#i-sigma"/></svg>Subscription Duration</li>
                <li><svg class="t-exp2"><use href="#i-chev"/></svg><i class="box"></i><svg class="t-ic"><use href="#i-date"/></svg>SubscriptionEnd</li>
                <li><svg class="t-exp2"><use href="#i-chev"/></svg><i class="box"></i><svg class="t-ic"><use href="#i-date"/></svg>SubscriptionStart</li>
                <li><i class="box"></i><span class="t-none"></span>SubscriptionType</li>
                <li><i class="box"></i><svg class="t-ic"><use href="#i-calc"/></svg>Total Customer</li>
                <li><i class="box"></i><svg class="t-ic"><use href="#i-calc"/></svg>Total Revenue</li>
                <li><i class="box"></i><svg class="t-ic"><use href="#i-calc"/></svg>Total Sunscription Type</li>
            </ul>
        </aside>

        <aside class="right-rail">
            <div class="rr-box">
                <svg viewBox="0 0 20 24"><path d="M2 4v16c0 2 3.500 3 8 3s8-1 8-3V4" fill="none" stroke="#252423" stroke-width="1.300"/><ellipse cx="10" cy="4" rx="8" ry="3" fill="none" stroke="#252423" stroke-width="1.300"/></svg>
            </div>
            <div class="rr-item">
                <svg viewBox="0 0 24 24"><path d="M8 8V2h5v8M2 10h6v12H2zM8 10h5v12H8z" fill="none" stroke="#3b3a39" stroke-width="1.200"/><path d="M13 5h5v6" fill="none" stroke="#3b3a39"/><rect x="14" y="11" width="9" height="12" rx="3" fill="#fff" stroke="#d87c1f" stroke-width="1.200"/></svg>
            </div>
            <div class="rr-box rr-box2">
                <svg viewBox="0 0 24 24"><path d="M8 10V2h5v12M2 10h6v12H2zM13 6h5v5" fill="none" stroke="#3b3a39" stroke-width="1.200"/><path d="M22 8L13 19l-4 5 6-1 8-13z" fill="#5ba5e5" stroke="#2b6fb0"/></svg>
            </div>
            <div class="rr-plus">
                <svg viewBox="0 0 24 24"><path d="M12 1v22M1 12h22" stroke="#252423" stroke-width="1.400"/></svg>
            </div>
            <div class="rr-gear">
                <svg viewBox="0 0 26 26"><path d="M11 1h4l1 4 3 1 3-2 3 4-3 3v3l3 3-3 4-3-2-3 1-1 5h-4l-1-5-3-1-3 2-3-4 3-3v-3L1 8l3-4 3 2 3-1z" fill="none" stroke="#252423" stroke-width="1.300"/><circle cx="13" cy="13" r="3.500" fill="none" stroke="#252423" stroke-width="1.300"/></svg>
            </div>
        </aside>
    </main>

    <footer class="statusbar">
        <span>Page 11 of 14</span>
        <div class="zoom-tools">
            <span class="z-minus">-</span>
            <div class="z-track"><i class="z-thumb"></i><i class="z-mid"></i></div>
            <span class="z-plus">+</span>
            <span class="z-pct">75%</span>
            <svg viewBox="0 0 20 20"><rect x="1" y="1" width="18" height="18" fill="#deecf9" stroke="#8a8886"/><path d="M4 8V4h4M12 4h4v4M16 12v4h-4M8 16H4v-4" fill="none" stroke="#3b3a39"/></svg>
        </div>
    </footer>

    <div class="taskbar">
        <div class="win-start">
            <svg viewBox="0 0 22 22"><path d="M1 4l8.500-1.200v7.700H1zM10.500 2.600L21 1v9.500H10.500zM1 11.500h8.500v7.700L1 18zM10.500 11.500H21V21l-10.500-1.500z" fill="#fff"/></svg>
        </div>
        <div class="win-search">
            <svg><use href="#i-mag"/></svg>
            <span>Type here to search</span>
            <svg class="nachos" viewBox="0 0 88 50">
                <ellipse cx="44" cy="37" rx="40" ry="12" fill="#c8c6c4"/>
                <ellipse cx="44" cy="34" rx="39" ry="12" fill="#f4f3ee"/>
                <path d="M0 14l16-3 2 14zM12 4l15 10-12 10zM28 2l12 13-14 4zM56 3l10 15-16-2zM68 7l4 14-14-3zM84 13l4 12-16 2zM86 28l-14 8-2-12zM16 30l10 14 8-12zM38 34l8 12 8-12zM58 34l10 10 6-13zM2 26l14-2-2 12z" fill="#f6cf4e" stroke="#d89a1e" stroke-width=".6"/>
                <path d="M12 26c8-9 22-8 32-8s24-3 34 7c-4 6-12 8-18 7-5 4-11 1-15 2-6 2-11-1-17 0-5 0-12-3-16-8z" fill="#c2701a"/>
                <path d="M42 1c8 4 10 14 6 24-6-3-10-13-6-24z" fill="#b7cf6a" stroke="#8fa94a" stroke-width=".7"/>
                <ellipse cx="30" cy="20" rx="10" ry="8" fill="#fdfdf6"/>
                <circle cx="60" cy="17" r="4.500" fill="#e2502b"/><circle cx="66" cy="23" r="4.500" fill="#e2502b"/><circle cx="58" cy="24" r="3" fill="#e2502b"/>
                <path d="M10 13l7 3-5 4zM74 21l6 5-8 2zM52 8l5 4-5 3zM20 30l5 2-4 2z" fill="#4f8f35"/>
            </svg>
        </div>
        <div class="tb-slot tb-view">
            <svg viewBox="0 0 20 24"><path d="M1 1h12M1 23h12M18 1v6M18 10v6M18 19v4" stroke="#fff" stroke-width="1.400"/><rect x="1" y="6" width="12" height="12" fill="none" stroke="#fff" stroke-width="1.400"/></svg>
        </div>
        <div class="tb-slot">
            <svg viewBox="0 0 28 32"><defs><linearGradient id="cp" x1="0" y1="0" x2="1" y2="1"><stop offset="0" stop-color="#38a0e0"/><stop offset=".5" stop-color="#8a6ce0"/><stop offset="1" stop-color="#f08a3c"/></linearGradient></defs><path d="M10 1h8c4 0 4 5 3 8l-5 16c-1 4-3 6-7 6H5C1 31 1 26 2 23L7 6c1-3 2-5 3-5z" fill="url(#cp)"/><path d="M17 8h6c4 0 5 4 4 8l-3 9c-1 4-3 6-7 6" fill="#e8a23c" opacity=".8"/><path d="M9 10l6 0-3 12h-5z" fill="#4bc27b" opacity=".7"/></svg>
        </div>
        <div class="tb-slot on">
            <svg viewBox="0 0 30 32"><path d="M1 3h11l2 3h15v24H1z" fill="#f4c430"/><path d="M1 3h11l2 3H1z" fill="#d99a1e"/><path d="M9 31V19h12v12h-3v-7h-6v7z" fill="#2b88d8"/></svg>
        </div>
        <div class="tb-slot"></div>
        <div class="tb-slot">
            <svg viewBox="0 0 30 34"><path d="M10 7c0-8 10-8 10 0" fill="none" stroke="#38a0e0" stroke-width="1.600"/><rect x="1" y="6" width="28" height="27" rx="3" fill="#f8f8f8"/><path d="M10 14h4.500v4.500H10z" fill="#f25022"/><path d="M15.500 14H20v4.500h-4.500z" fill="#7fba00"/><path d="M10 19.500h4.500V24H10z" fill="#00a4ef"/><path d="M15.500 19.500H20V24h-4.500z" fill="#ffb900"/></svg>
        </div>
        <div class="tb-slot mail-slot">
            <svg viewBox="0 0 32 36"><path d="M16 0L1 14h30z" fill="#0a5fa8"/><path d="M1 14v21h30V14L16 26z" fill="#1ea8e8"/><path d="M3 14h26L16 26z" fill="#d9f1fb"/></svg>
        </div>
        <div class="tb-slot on">
            <svg viewBox="0 0 32 34"><path d="M16 1c9 0 15 7 15 14 0 5-4 8-8 8-6 0-7-6-4-8-8-2-14 4-13 9C1 20 1 16 1 14 3 6 9 1 16 1z" fill="#35c1c6"/><path d="M6 24c-2-6 3-12 10-11 2 0 3 1 3 2-3 2-2 8 4 8 3 0 5-1 6-2-3 7-8 11-14 11-4 0-8-3-9-8z" fill="#1668c7"/></svg>
        </div>
        <div class="tb-slot">
            <svg viewBox="0 0 32 32"><circle cx="16" cy="16" r="15" fill="#e33b2e"/><path d="M10 21L16 31A15 15 0 0 1 3 9z" fill="#2fa84f"/><path d="M16 31a15 15 0 0 0 13-22H16z" fill="#fbc116"/><circle cx="16" cy="16" r="7" fill="#fff"/><circle cx="16" cy="16" r="5.500" fill="#3b82f0"/></svg>
        </div>
        <div class="tb-slot">
            <svg viewBox="0 0 32 32"><ellipse cx="16" cy="16" rx="11" ry="15" fill="none" stroke="#e01e26" stroke-width="6"/></svg>
        </div>
        <div class="tb-slot pbi-slot">
            <svg viewBox="0 0 30 34"><rect x="20" y="1" width="9" height="32" fill="#e2a60c"/><rect x="11" y="10" width="11" height="23" fill="#f2c811"/><rect x="2" y="19" width="11" height="14" fill="#fbe37a"/></svg>
        </div>
        <div class="tb-slot on">
            <svg viewBox="0 0 32 32"><rect x="12" y="3" width="18" height="26" fill="none" stroke="#2aa36b" stroke-width="1.500"/><path d="M16 8h10M16 13h10M16 18h10M16 23h10" stroke="#2aa36b" stroke-width="2"/><path d="M1 4l15-2v28L1 28z" fill="#107c41"/><text class="xl-x2" x="8.500" y="21" text-anchor="middle">X</text></svg>
        </div>
        <div class="tb-slot on">
            <svg viewBox="0 0 34 34"><circle cx="15" cy="15" r="15" fill="#e33b2e"/><path d="M15 30a15 15 0 0 0 13-22H15z" fill="#fbc116"/><path d="M10 20l5 10A15 15 0 0 1 2 7z" fill="#2fa84f"/><circle cx="15" cy="15" r="6.500" fill="#fff"/><circle cx="15" cy="15" r="5" fill="#3b82f0"/><circle cx="25" cy="25" r="9" fill="#164a7c"/><text class="chr-i" x="25" y="29" text-anchor="middle">I</text></svg>
        </div>
        <div class="tb-slot on">
            <svg viewBox="0 0 32 34"><ellipse cx="14" cy="20" rx="12" ry="12" fill="#dfeaf4"/><circle cx="9" cy="16" r="2.500" fill="#e33b2e"/><circle cx="14" cy="12" r="2.500" fill="#fbc116"/><circle cx="7" cy="23" r="2.500" fill="#2fa84f"/><circle cx="14" cy="27" r="2.500" fill="#3b82f0"/><path d="M29 1l-9 22 3 2L31 3z" fill="#b9762c"/></svg>
        </div>
        <div class="tb-slot on">
            <svg viewBox="0 0 30 34"><rect x="3" y="1" width="14" height="22" fill="#f2c811"/><rect x="12" y="1" width="9" height="18" fill="#e2a60c"/><path d="M24 2h5v6M2 27v6h6" fill="none" stroke="#2aa36b" stroke-width="2"/><path d="M14 18l12 15M26 18L14 33" stroke="#a36bd8" stroke-width="2.500"/></svg>
        </div>
        <div class="tb-slot on">
            <svg viewBox="0 0 32 32"><circle cx="16" cy="16" r="14" fill="#2b2b2b" stroke="#c47ab8" stroke-width="2.500"/><path d="M12 9l11 7-11 7z" fill="#f8f8f8"/></svg>
        </div>
        <div class="tb-slot on">
            <svg viewBox="0 0 26 36"><circle cx="13" cy="22" r="9" fill="none" stroke="#fff" stroke-width="3.500"/><path d="M2 11c5-6 17-6 22 0M7 5c4-3 8-3 12 0" fill="none" stroke="#fff" stroke-width="3"/></svg>
        </div>
        <div class="tray">
            <svg class="tray-weather" viewBox="0 0 32 36"><circle cx="16" cy="19" r="14" fill="#f08a1c"/><ellipse cx="10" cy="10" rx="9" ry="6" fill="#9cc3e4"/><ellipse cx="22" cy="28" rx="9" ry="6" fill="#9cc3e4"/></svg>
            <span class="temp">28°C</span>
            <svg class="tray-i caret" viewBox="0 0 18 12"><path d="M1 11l8-9 8 9" fill="none" stroke="#fff" stroke-width="1.200"/></svg>
            <svg class="tray-i" viewBox="0 0 18 26"><rect x="2" y="6" width="9" height="14" rx="1" fill="none" stroke="#fff"/><path d="M11 11l5-2v8l-5-2M4 2c3-2 6-2 9 0M4 24c3 2 6 2 9 0" fill="none" stroke="#fff"/></svg>
            <svg class="tray-i" viewBox="0 0 20 20"><path d="M2 18a15 15 0 0 1 16-15M6 18a10 10 0 0 1 12-10M10 18a6 6 0 0 1 8-5" fill="none" stroke="#bbb"/><circle cx="16" cy="17" r="2" fill="#fff"/></svg>
            <svg class="tray-i" viewBox="0 0 16 26"><rect width="16" height="26" rx="8" fill="#0a84ff"/><path d="M4 8l8 9-4 4V5l4 4-8 9" fill="none" stroke="#fff"/></svg>
            <svg class="tray-i" viewBox="0 0 22 22"><path d="M2 8h4l5-5v16l-5-5H2zM14 8c1 2 1 4 0 6M17 5c2 4 2 8 0 12" fill="none" stroke="#fff"/></svg>
            <svg class="tray-i pen" viewBox="0 0 22 22"><path d="M3 20c-2-3 3-4 4-7l5-9c2-3 6 0 4 3l-5 9c-1 2-4 1-3-2l5-8M15 13c3-1 5 2 3 3" fill="none" stroke="#fff"/></svg>
            <div class="clock"><span>8:43 AM</span><span>11/7/2024</span></div>
            <div class="notif">
                <svg viewBox="0 0 24 24"><path d="M1 1h19v16H10l-5 5v-5H1z" fill="#fff"/><path d="M4 6h13M4 10h13M4 14h9" stroke="#3b3a39"/></svg>
                <span class="notif-num">1</span>
            </div>
        </div>
    </div>
</body>
</html>
```

FILE: styles.css
```css
* {
    box-sizing: border-box;
}

html, body {
    margin: 0;
    padding: 0;
}

body {
    width: 1920px;
    height: 1080px;
    overflow: hidden;
    font-family: 'Open Sans', 'Noto Sans', sans-serif;
    color: #252423;
    background: #f3f2f1;
}

.defs {
    position: absolute;
}

ul {
    list-style: none;
    margin: 0;
    padding: 0;
}

svg {
    display: block;
    flex: none;
}

/* title bar */
.titlebar {
    height: 43px;
    background: #3b3a39;
    color: #fff;
    display: flex;
    align-items: center;
    padding-left: 22px;
    position: relative;
}

.titlebar::before {
    content: "";
    position: absolute;
    left: 808px;
    top: 0;
    width: 302px;
    height: 1px;
    background: linear-gradient(90deg, #0f7bdc 20%, #fff 20%);
}

.tb-ic {
    width: 19px;
    height: 19px;
}

.tb-undo {
    width: 18px;
    height: 22px;
    margin-left: 17px;
}

.tb-redo {
    width: 18px;
    height: 22px;
    margin-left: 20px;
}

.doc-title {
    font-size: 14.500px;
    margin-left: 12px;
    width: 309px;
    white-space: nowrap;
}

.mid-dot {
    font-size: 10px;
    vertical-align: 2px;
}

.doc-caret {
    width: 0;
    height: 0;
    border: 5px solid transparent;
    border-top: 6px solid #fff;
    border-bottom: 0;
    margin-left: 8px;
}

.top-search {
    width: 501px;
    height: 30px;
    background: #d2d0ce;
    border-radius: 2px;
    margin-left: 367px;
    display: flex;
    align-items: center;
    padding-left: 21px;
    color: #3e6b63;
    font-size: 16px;
}

.top-search-ic {
    width: 20px;
    height: 20px;
    color: #252423;
    margin-right: 16px;
}

.signin {
    font-size: 14.500px;
    margin-left: 333px;
    width: 57px;
    white-space: nowrap;
}

.avatar {
    width: 24px;
    height: 24px;
    margin-left: 1px;
}

.win-btns {
    display: flex;
    gap: 41px;
    margin-left: 41px;
}

.win-btns svg {
    width: 14px;
    height: 14px;
}

/* menu */
.menubar {
    height: 45px;
    background: #fafafa;
    display: flex;
    font-size: 16.500px;
    padding-left: 27px;
    position: relative;
}

.menubar a {
    line-height: 40px;
    height: 38px;
    color: #252423;
}

.tab-home {
    margin-left: 49px;
    font-weight: 600;
    border-bottom: 3px solid #117865;
}

.tab-insert { margin-left: 37px; }
.tab-modeling { margin-left: 38px; }
.tab-view { margin-left: 42px; }
.tab-optimize { margin-left: 42px; }
.tab-help { margin-left: 38px; }

.share-btn {
    position: absolute;
    left: 1808px;
    top: 5px;
    width: 105px;
    height: 30px;
    border: 0;
    border-radius: 4px;
    background: #117865;
    color: #fff;
    font-family: inherit;
    font-size: 14px;
    display: flex;
    align-items: center;
    gap: 6px;
    padding: 0 0 0 9px;
}

.share-btn svg {
    width: 18px;
    height: 18px;
}

.share-caret {
    width: 8px;
    height: 8px;
    border-right: 1.500px solid #fff;
    border-bottom: 1.500px solid #fff;
    transform: rotate(45deg);
    margin: -4px 0 0 1px;
}

/* ribbon */
.ribbon {
    height: 112px;
    background: #fafafa;
    display: flex;
    position: relative;
    box-shadow: 0 1px 3px rgba(0, 0, 0, 0.2);
    z-index: 2;
}

.rgroup {
    height: 110px;
    border-right: 1px solid #d6d4d2;
    display: flex;
    flex-direction: column;
    justify-content: space-between;
}

.g-clip { width: 201px; }
.g-data { width: 460px; }
.g-data .rbody { padding-left: 5px; }
.g-queries { width: 145px; }
.g-queries .rbody { padding-left: 9px; }
.g-insert { width: 510px; }
.g-insert .rbody { padding-left: 7px; }
.g-calc { width: 143px; }
.g-calc .rbody { padding-left: 12px; }
.g-sens { width: 92px; }
.g-share { width: 74px; }
.g-copilot { width: 73px; }

.rbody {
    display: flex;
    height: 92px;
    padding-top: 8px;
}

.rlabel {
    font-size: 12px;
    line-height: 18px;
    text-align: center;
    color: #484644;
    margin-bottom: -3px;
}

.rbtn {
    flex: none;
    display: flex;
    flex-direction: column;
    align-items: center;
    text-align: center;
    font-size: 14px;
    line-height: 20px;
    color: #252423;
    white-space: nowrap;
}

.rbtn svg {
    width: 38px;
    height: 38px;
    margin-bottom: 3px;
}

.off,
.off span {
    color: #b3b0ad;
}

.w-paste { width: 58px; margin-left: 6px; }
.w-42 { width: 42px; }
.w-50 { width: 50px; }
.w-54 { width: 54px; }
.w-56 { width: 56px; }
.w-58 { width: 58px; }
.w-60 { width: 60px; }
.w-62 { width: 62px; }
.w-70 { width: 70px; }
.w-72 { width: 72px; }
.w-76 { width: 76px; }
.w-88 { width: 88px; }
.w-90 { width: 90px; }

.box-gap {
    margin-left: 4px;
}

.mini-caret {
    display: inline-block;
    width: 5px;
    height: 5px;
    border-right: 1.300px solid #252423;
    border-bottom: 1.300px solid #252423;
    transform: rotate(45deg);
    margin: 0 0 3px 2px;
}

.off .mini-caret {
    border-color: #b3b0ad;
}

.clip-col {
    margin: -8px 0 0 2px;
}

.clip-row {
    display: flex;
    align-items: center;
    gap: 6px;
    height: 30px;
    font-size: 14px;
    white-space: nowrap;
}

.clip-row svg {
    width: 18px;
    height: 22px;
}

.xl-x {
    font: bold 13px 'Open Sans', sans-serif;
    fill: #fff;
}

.xl-x2 {
    font: bold 14px 'Open Sans', sans-serif;
    fill: #fff;
}

.chr-i {
    font: bold 11px 'Open Sans', sans-serif;
    fill: #fff;
}

.gallery {
    width: 317px;
    height: 76px;
    margin: 1px 0 0 2px;
    border: 1.500px solid #8a8886;
    background: #fff;
    display: flex;
}

.gallery-grid {
    flex: 1;
    display: grid;
    grid-template-columns: repeat(9, 20px);
    grid-auto-rows: 20px;
    align-content: start;
    column-gap: 12.700px;
    row-gap: 16px;
    padding: 9px 0 0 7px;
}

.gallery-grid svg {
    width: 20px;
    height: 20px;
}

.gal-num {
    font: 7px 'Open Sans', sans-serif;
    fill: #2b6fb0;
}

.gallery-more {
    width: 20px;
    border-left: 1.500px solid #8a8886;
    text-align: center;
    padding-top: 28px;
    line-height: 10px;
}

.mini-caret.dark {
    margin: 0;
    width: 6px;
    height: 6px;
}

.box-a {
    font: 22px 'Open Sans', sans-serif;
    fill: #2b88d8;
}

.ribbon-collapse {
    position: absolute;
    left: 1903px;
    top: 101px;
    width: 9px;
    height: 9px;
    border-left: 1.500px solid #252423;
    border-top: 1.500px solid #252423;
    transform: rotate(45deg);
}

/* workspace */
.workspace {
    height: 800px;
    display: flex;
}

.left-rail {
    width: 51px;
    display: flex;
    flex-direction: column;
    align-items: center;
    gap: 28px;
    padding-top: 13px;
    flex: none;
    position: relative;
}

.left-rail::before {
    content: "";
    position: absolute;
    left: 0;
    top: 5px;
    width: 3px;
    height: 45px;
    background: #117865;
}

.left-rail svg {
    width: 22px;
    height: 22px;
}

.dax {
    font: bold 7px 'Open Sans', sans-serif;
    fill: #8a8886;
}

.center {
    width: 1239px;
    flex: none;
    display: flex;
    flex-direction: column;
}

.center-top {
    height: 756px;
    display: flex;
    background: #fff;
}

.report {
    width: 1199px;
    border-right: 1px solid #d6d4d2;
    flex: none;
}

.filters {
    width: 40px;
    flex: none;
    display: flex;
    flex-direction: column;
    align-items: center;
    padding-top: 16px;
}

.filters-chev {
    width: 16px;
    height: 16px;
}

.filters-funnel {
    width: 16px;
    height: 16px;
    margin-top: 19px;
}

.filters-text {
    writing-mode: vertical-rl;
    font-size: 18px;
    font-weight: 600;
    margin-top: 5px;
    line-height: 20px;
}

/* canvas */
.canvas {
    width: 1198px;
    height: 673px;
    background: #11357f;
    padding-left: 4px;
}

.row-top {
    height: 232px;
    display: flex;
}

.top-left {
    width: 742px;
    flex: none;
}

.dash-title {
    height: 118px;
    margin: 0;
    padding: 11px 0 0 0;
    width: 636px;
    text-align: center;
    font: bold 35px/41px 'Liberation Serif', serif;
    color: #a0cdfb;
    transform: scaleX(0.89);
}

.kpi-row {
    height: 113px;
    display: flex;
    align-items: flex-end;
    padding-bottom: 1px;
}

.card {
    flex: none;
    background: #0f68bf;
    border: 4px solid #a0ccfb;
    border-radius: 30px;
    box-shadow: inset 0 0 16px 6px #12408f;
    overflow: hidden;
    font-family: 'Liberation Serif', serif;
    color: #a0cdfb;
}

.kpi {
    text-align: center;
}

.kpi-title {
    font-weight: bold;
    font-size: 17.800px;
    line-height: 21px;
    padding: 6px 0 0 10px;
}

.kpi-value {
    font-size: 47px;
    margin-left: 2px;
}

.kpi-types { width: 173px; height: 112px; }
.kpi-types .kpi-title { padding-top: 6px; }
.kpi-types .kpi-value { line-height: 50px; }
.kpi-renew { width: 189px; height: 110px; }
.kpi-renew .kpi-title { padding-top: 7px; }
.kpi-renew .kpi-value { line-height: 69px; }
.kpi-total { width: 165px; height: 110px; margin-left: 3px; }
.kpi-total .kpi-title { padding-top: 7px; }
.kpi-total .kpi-value { line-height: 69px; }
.kpi-cancel { width: 207px; height: 105px; margin-left: 1px; }
.kpi-cancel .kpi-title { padding-top: 7px; }
.kpi-cancel .kpi-value { line-height: 68px; }

.top-right {
    width: 452px;
    flex: none;
    padding-top: 14px;
}

.slicer-row {
    display: flex;
    height: 116px;
    align-items: flex-start;
}

.row-b {
    height: 102px;
}

.sl-2324 { width: 226px; height: 113px; }
.sl-2022 { width: 225px; height: 112px; margin-top: 2px; }
.sl-type { width: 285px; height: 98px; }
.sl-region { width: 164px; height: 100px; margin-left: 2px; }

.sl-title {
    font-weight: bold;
    font-size: 17px;
    line-height: 24px;
    padding: 5px 0 0 10px;
    color: #c0dcfb;
    white-space: nowrap;
}

.sl-small {
    font-size: 15px;
    color: #e6f1fd;
    padding: 5px 0 0 13px;
}

.sl-big {
    font-size: 19.400px;
    color: #a0cdfb;
    padding: 4px 0 0 12px;
}

.sl-white {
    color: #e6f1fd;
}

.dropdown {
    height: 26px;
    border: 2px solid #7ea6d6;
    margin: 5px 0 0 16.500px;
    width: 186px;
    font-family: 'Liberation Sans', sans-serif;
    font-size: 13px;
    line-height: 24px;
    padding-left: 5px;
    color: #4b79ad;
    position: relative;
}

.dropdown::after {
    content: "";
    position: absolute;
    right: 5px;
    top: 3px;
    width: 10px;
    height: 10px;
    border-right: 1px solid #4b79ad;
    border-bottom: 1px solid #4b79ad;
    transform: rotate(45deg);
}

.sl-2022 .dropdown {
    margin-left: 14px;
}

.lit-drop {
    width: 122px;
    height: 27px;
    margin: 10px 0 0 17px;
    border-color: #dcecff;
    color: #cfe3fb;
    font-family: 'Liberation Serif', serif;
    font-size: 15px;
}

.lit-drop::after {
    border-color: #dcecff;
}

.sub-tiles {
    display: flex;
    margin: 3px 0 0 32px;
    gap: 1px;
}

.sub-tiles span {
    width: 71px;
    height: 45px;
    border: 1.500px solid #5b6b80;
    text-align: center;
    font-weight: bold;
    font-size: 11px;
    line-height: 42px;
    color: #c0dcfb;
}

.row-mid {
    height: 213px;
    display: flex;
}

.chart-title {
    height: 28px;
    line-height: 34px;
    font-weight: bold;
    font-size: 19.200px;
    text-align: center;
    white-space: nowrap;
}

.c-pop .chart-title,
.c-region .chart-title,
.c-ctrend .chart-title,
.c-pie .chart-title,
.c-strend .chart-title {
    padding-left: 8px;
}

.wf-title {
    font-size: 17.800px;
}

.trend-title {
    font-size: 19.800px;
    line-height: 34px;
}

.pie-title {
    font-size: 17.800px;
    line-height: 36px;
}

.c-top { width: 316px; height: 211px; }
.c-wf { width: 276px; height: 211px; margin-left: 2px; }
.c-pop { width: 315px; height: 215px; margin-left: 3px; }
.c-region { width: 273px; height: 216px; margin: 1px 0 0 2px; }

.row-bottom {
    display: flex;
    padding-left: 1px;
    align-items: flex-start;
}

.c-ctrend { width: 431px; height: 226px; }
.c-pie { width: 307px; height: 226px; margin-left: 2px; }
.c-strend { width: 445px; height: 222px; margin: 5px 0 0 1px; }

.grid {
    fill: none;
    stroke: #b5cde9;
    stroke-width: 1;
    stroke-dasharray: 1 4;
}

.bar {
    fill: #a0cdfc;
}

.bar.edge {
    stroke: #8da7c2;
}

.navy {
    fill: #11327e;
}

.wf-join {
    fill: none;
    stroke: #6f8fb3;
}

.leader {
    fill: none;
    stroke: #4a86c6;
}

.ax {
    font: 12.300px 'Liberation Serif', serif;
    fill: #d6e8fc;
}

.ax-b {
    font: bold 12px 'Liberation Serif', serif;
    fill: #d6e8fc;
}

.ax-w {
    font: bold 12.600px 'Liberation Serif', serif;
    fill: #e6f1fd;
}

.cat {
    font: 15px 'Liberation Serif', serif;
    fill: #a0cdfb;
}

.bar-val {
    font: 12px 'Liberation Mono', monospace;
    fill: #1d3d70;
}

.leg {
    font: 13px 'Liberation Serif', serif;
    fill: #d6e8fc;
}

.leg-h {
    font: bold 13px 'Liberation Serif', serif;
    fill: #e6f1fd;
}

.don {
    font: 15px 'Liberation Serif', serif;
    fill: #cfe3fb;
}

.pie-lab {
    font: bold 15px 'Liberation Serif', serif;
    fill: #e6f1fd;
}

.trend-line {
    fill: none;
    stroke: #118dff;
    stroke-width: 3.500;
    stroke-linejoin: round;
    marker-start: url(#dot);
    marker-mid: url(#dot);
    marker-end: url(#dot);
}

/* page tabs */
.tabbar {
    height: 44px;
    display: flex;
    background: #fff;
    font-size: 14.300px;
}

.tab-tools {
    width: 160px;
    flex: none;
    background: #f3f2f1;
    border-right: 1px solid #8a8886;
    display: flex;
    align-items: center;
    position: relative;
}

.view-ic {
    width: 31px;
    margin-left: 12px;
    height: 44px;
    display: flex;
    align-items: center;
    justify-content: center;
    padding-bottom: 6px;
}

.view-ic svg {
    width: 25px;
    height: 23px;
}

.view-ic.active {
    border-bottom: 4px solid transparent;
    background: linear-gradient(#117865, #117865) no-repeat 0 36px / 31px 3px;
}

.view-ic.phone {
    margin-left: 24px;
}

.view-ic.phone svg {
    width: 16px;
    height: 26px;
}

.tri-left,
.tri-right {
    width: 0;
    height: 0;
    border: 5px solid transparent;
    margin-bottom: 2px;
}

.tri-left {
    border-right: 5px solid #252423;
    border-left: 0;
    margin-left: 19px;
}

.tri-right {
    border-left: 5px solid #c8c6c4;
    border-right: 0;
    margin-left: 24px;
}

.ptab {
    flex: none;
    display: flex;
    align-items: center;
    justify-content: center;
    border-right: 1px solid #c8c6c4;
    border-bottom: 1px solid #e1dfdd;
    height: 44px;
    padding-top: 1px;
}

.stub { width: 38px; justify-content: flex-start; padding-left: 4px; }
.p95 { width: 95px; }
.p96 { width: 96px; }
.p101 { width: 101px; }
.p102 { width: 102px; }
.p103 { width: 103px; }
.p104 { width: 104px; }

.current {
    font-weight: 600;
    border-bottom: 5px solid #117865;
    padding-top: 5px;
}

.ptab-add {
    flex: 1;
    background: #117865;
    color: #fff;
    font-size: 24px;
    font-weight: 700;
    text-align: center;
    line-height: 42px;
}

/* format + data panes */
.format-pane {
    width: 227px;
    flex: none;
    border-right: 1px solid #d6d4d2;
    border-left: 1px solid #e1dfdd;
    position: relative;
}

.data-pane {
    width: 363px;
    flex: none;
    border-right: 1px solid #e1dfdd;
    position: relative;
}

.pane-head {
    height: 50px;
    display: flex;
    align-items: center;
    padding-left: 10px;
    position: relative;
}

.pane-title {
    font-size: 18px;
    font-weight: 600;
}

.dots {
    position: absolute;
    left: 169px;
    top: 14px;
    font-size: 18px;
    font-weight: 400;
    letter-spacing: 1.500px;
    line-height: 20px;
}

.pane-chev {
    position: absolute;
    left: 199px;
    top: 16px;
    width: 16px;
    height: 16px;
}

.data-pane .dots {
    left: 309px;
}

.data-pane .pane-chev {
    left: 336px;
}

.format-search {
    width: 204px;
    height: 32px;
    margin: 2px 0 15px 10px;
    border: 1px solid #8a8886;
    border-radius: 2px;
    display: flex;
    align-items: center;
    padding-left: 9px;
    gap: 8px;
    font-size: 17px;
    color: #3b3a39;
}

.format-search svg {
    width: 18px;
    height: 18px;
    color: #3b3a39;
}

.format-list li {
    height: 51px;
    border-bottom: 1px solid #e1dfdd;
    display: flex;
    align-items: center;
    padding: 2px 0 0 13px;
    gap: 7px;
    font-size: 14.500px;
    color: #252423;
}

.format-list svg {
    width: 10px;
    height: 16px;
}

.data-search {
    width: 350px;
    height: 30px;
    margin: 7px 0 11px 6px;
    background: #fff;
    border: 1px solid #e1dfdd;
    border-bottom: 1.500px solid #605e5c;
    border-radius: 4px;
    display: flex;
    align-items: center;
    padding-left: 14px;
    gap: 8px;
    font-size: 17px;
    color: #605e5c;
}

.data-search svg {
    width: 18px;
    height: 18px;
}

.scrollbar {
    position: absolute;
    left: 348px;
    top: 97px;
    width: 9px;
    height: 254px;
    background: #c8c6c4;
}

.tree li {
    height: 30px;
    display: flex;
    align-items: center;
    font-size: 14.200px;
    color: #3b3a39;
    padding-left: 55px;
    position: relative;
    white-space: nowrap;
}

.tree .t-table {
    padding-left: 18px;
}

.t-exp {
    width: 10px;
    height: 16px;
}

.t-exp.open {
    width: 14px;
    height: 9px;
    margin-left: -2px;
    margin-right: -2px;
}

.t-tab {
    width: 16px;
    height: 16px;
    margin: 0 7px 0 8px;
}

.t-exp2 {
    position: absolute;
    left: 36px;
    top: 7px;
    width: 10px;
    height: 16px;
}

.box {
    width: 15px;
    height: 15px;
    border: 1px solid #8a8886;
    border-radius: 2px;
    background: #fafafa;
    flex: none;
}

.t-ic {
    width: 16px;
    height: 19px;
    margin: 0 7px 0 10px;
}

.t-none {
    width: 33px;
    flex: none;
}

.t-hover {
    display: block;
    width: 241px;
    height: 25px;
    line-height: 25px;
    background: #fff;
}

.right-rail {
    flex: 1;
    background: #faf9f8;
    position: relative;
}

.rr-box {
    height: 40px;
    background: #e6e6e6;
    border: 1px solid #c8c6c4;
    border-top: 0;
    display: flex;
    align-items: center;
    justify-content: center;
}

.rr-box svg {
    width: 20px;
    height: 25px;
}

.rr-box2 svg {
    width: 24px;
    height: 24px;
}

.rr-item {
    height: 40px;
    display: flex;
    align-items: center;
    justify-content: center;
}

.rr-item svg {
    width: 24px;
    height: 24px;
}

.rr-plus {
    height: 42px;
    display: flex;
    align-items: center;
    justify-content: center;
}

.rr-plus svg {
    width: 24px;
    height: 24px;
}

.rr-gear {
    position: absolute;
    left: 0;
    right: 0;
    bottom: 0;
    height: 40px;
    border-top: 1px solid #e1dfdd;
    display: flex;
    align-items: center;
    justify-content: center;
}

.rr-gear svg {
    width: 26px;
    height: 26px;
}

/* status bar */
.statusbar {
    height: 28px;
    border-top: 1px solid #e1dfdd;
    background: #f3f2f1;
    font-size: 13.500px;
    color: #3b3a39;
    display: flex;
    align-items: center;
    justify-content: space-between;
    padding: 0 23px 0 5px;
}

.zoom-tools {
    display: flex;
    align-items: center;
}

.z-minus {
    font-weight: 700;
    width: 10px;
}

.z-track {
    width: 129px;
    height: 1.500px;
    background: #605e5c;
    position: relative;
}

.z-thumb {
    position: absolute;
    left: 46px;
    top: -6px;
    width: 5px;
    height: 13px;
    background: #605e5c;
}

.z-mid {
    position: absolute;
    left: 64px;
    top: -3px;
    width: 1px;
    height: 7px;
    background: #605e5c;
}

.z-plus {
    font-size: 18px;
    margin-left: 7px;
    line-height: 18px;
}

.z-pct {
    margin-left: 16px;
    color: #605e5c;
}

.zoom-tools svg {
    width: 19px;
    height: 19px;
    margin-left: 26px;
}

/* windows taskbar */
.taskbar {
    height: 52px;
    border-top: 1px solid #111;
    background: linear-gradient(90deg, #30282f 0, #3f2e2a 25%, #402e29 45%, #3f3f41 60%, #3e3f42 100%);
    display: flex;
    color: #fff;
}

.win-start {
    width: 60px;
    display: flex;
    align-items: center;
    justify-content: center;
    flex: none;
}

.win-start svg {
    width: 21px;
    height: 21px;
}

.win-search {
    width: 360px;
    flex: none;
    background: #f3f3f3;
    border-top: 1px solid #bbb;
    display: flex;
    align-items: center;
    padding-left: 13px;
    color: #252423;
    font-size: 18px;
    position: relative;
}

.win-search svg {
    width: 22px;
    height: 22px;
    margin-right: 15px;
}

.win-search .nachos {
    width: 88px;
    height: 50px;
    position: absolute;
    right: 6px;
    top: 0;
    margin: 0;
}

.tb-slot {
    width: 60.200px;
    flex: none;
    display: flex;
    align-items: center;
    justify-content: center;
    position: relative;
}

.tb-slot svg {
    width: 30px;
    height: 32px;
}

.tb-view {
    width: 64px;
}

.tb-view svg {
    width: 20px;
    height: 24px;
}

.tb-slot.on::after,
.mail-slot::after,
.pbi-slot::after {
    content: "";
    position: absolute;
    bottom: 0;
    left: 6px;
    right: 6px;
    height: 3px;
    background: #76b9ed;
}

.mail-slot {
    background: #b0672f;
}

.mail-slot::after {
    left: 0;
    right: 0;
    background: #f7630c;
}

.pbi-slot {
    background: #6b6a69;
}

.tray {
    flex: 1;
    display: flex;
    align-items: center;
    padding-left: 30px;
    font-size: 16px;
}

.tray-weather {
    width: 30px;
    height: 34px;
}

.temp {
    font-size: 18px;
    margin: 0 36px 0 10px;
    white-space: nowrap;
}

.tray-i {
    width: 16px;
    height: 24px;
    margin-right: 24px;
}

.tray-i.caret {
    height: 12px;
}

.tray-i.pen {
    margin: 0 22px 0 6px;
}

.clock {
    width: 74px;
    margin-left: -2px;
    text-align: center;
    font-size: 14px;
    line-height: 24px;
    display: flex;
    flex-direction: column;
    white-space: nowrap;
}

.notif {
    margin-left: 22px;
    position: relative;
}

.notif svg {
    width: 22px;
    height: 22px;
}

.notif-num {
    position: absolute;
    left: 8px;
    top: 10px;
    width: 20px;
    height: 20px;
    border: 1px solid #fff;
    border-radius: 50%;
    background: #3e3f42;
    font-size: 13px;
    line-height: 18px;
    text-align: center;
}
```
